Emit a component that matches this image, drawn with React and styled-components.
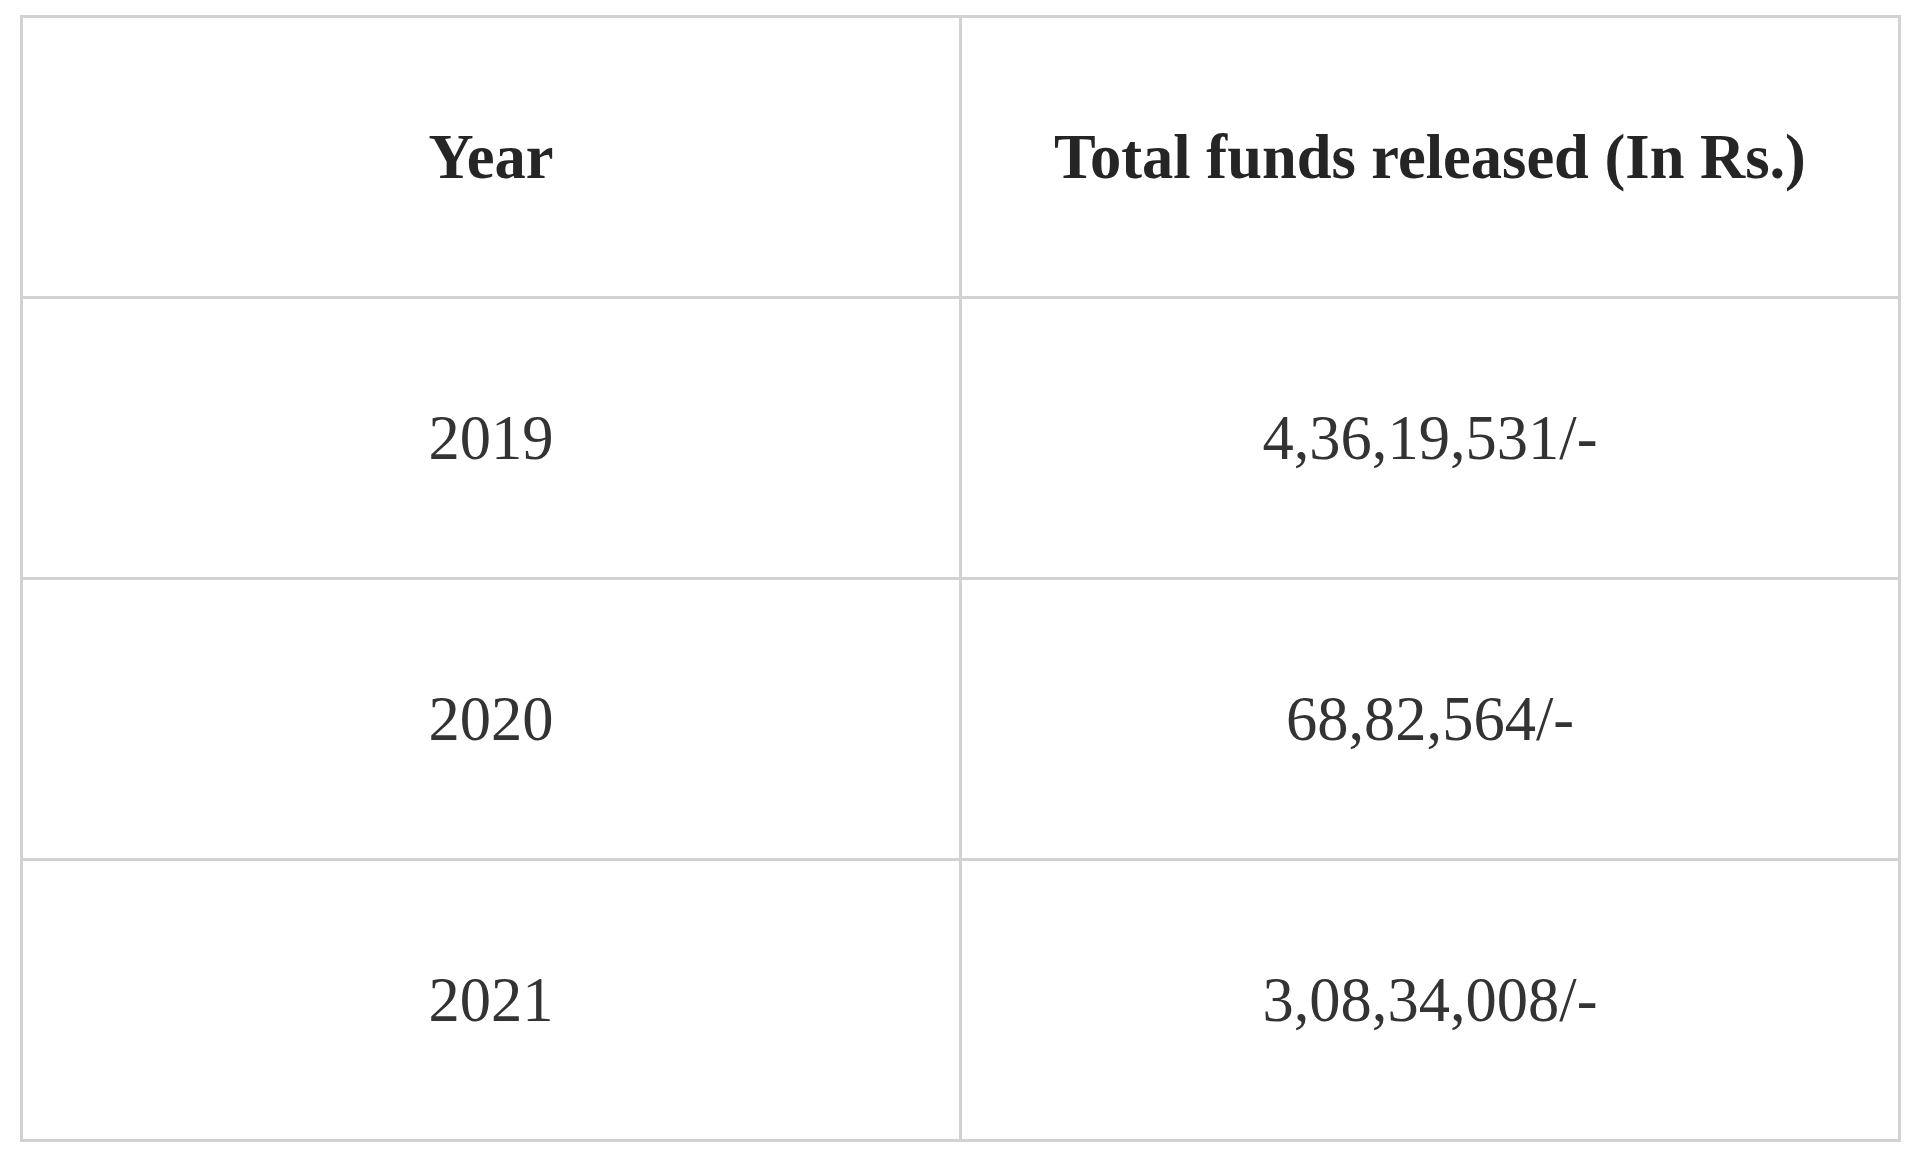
import React from 'react'
import styled, { createGlobalStyle } from 'styled-components'

const GlobalStyle = createGlobalStyle`
  html, body {
    margin: 0;
    padding: 0;
    background: #ffffff;
  }
`;

const Page = styled.div`
  padding: 15px 18px 0 20px;
`;

const Table = styled.div`
  display: grid;
  grid-template-columns: 1fr 1fr;
  width: 1881px;
  border-top: 3px solid #d2d2d2;
  border-left: 3px solid #d2d2d2;
  box-sizing: border-box;
`;

const Cell = styled.div`
  box-sizing: border-box;
  height: 281px;
  display: flex;
  align-items: center;
  justify-content: center;
  border-right: 3px solid #d2d2d2;
  border-bottom: 3px solid #d2d2d2;
  font-family: "Liberation Serif", "Times New Roman", serif;
  font-size: 62.5px;
  font-weight: ${(props) => (props.$head ? 700 : 400)};
  color: ${(props) => (props.$head ? '#252525' : '#333333')};
`;

const rows = [
  ['2019', '4,36,19,531/-'],
  ['2020', '68,82,564/-'],
  ['2021', '3,08,34,008/-'],
]

const App = () => {
  return (
    <Page>
      <GlobalStyle />
      <Table>
        <Cell $head>Year</Cell>
        <Cell $head>Total funds released (In Rs.)</Cell>
        {rows.map(([year, funds]) => (
          <React.Fragment key={year}>
            <Cell>{year}</Cell>
            <Cell>{funds}</Cell>
          </React.Fragment>
        ))}
      </Table>
    </Page>
  )
}

export default App
